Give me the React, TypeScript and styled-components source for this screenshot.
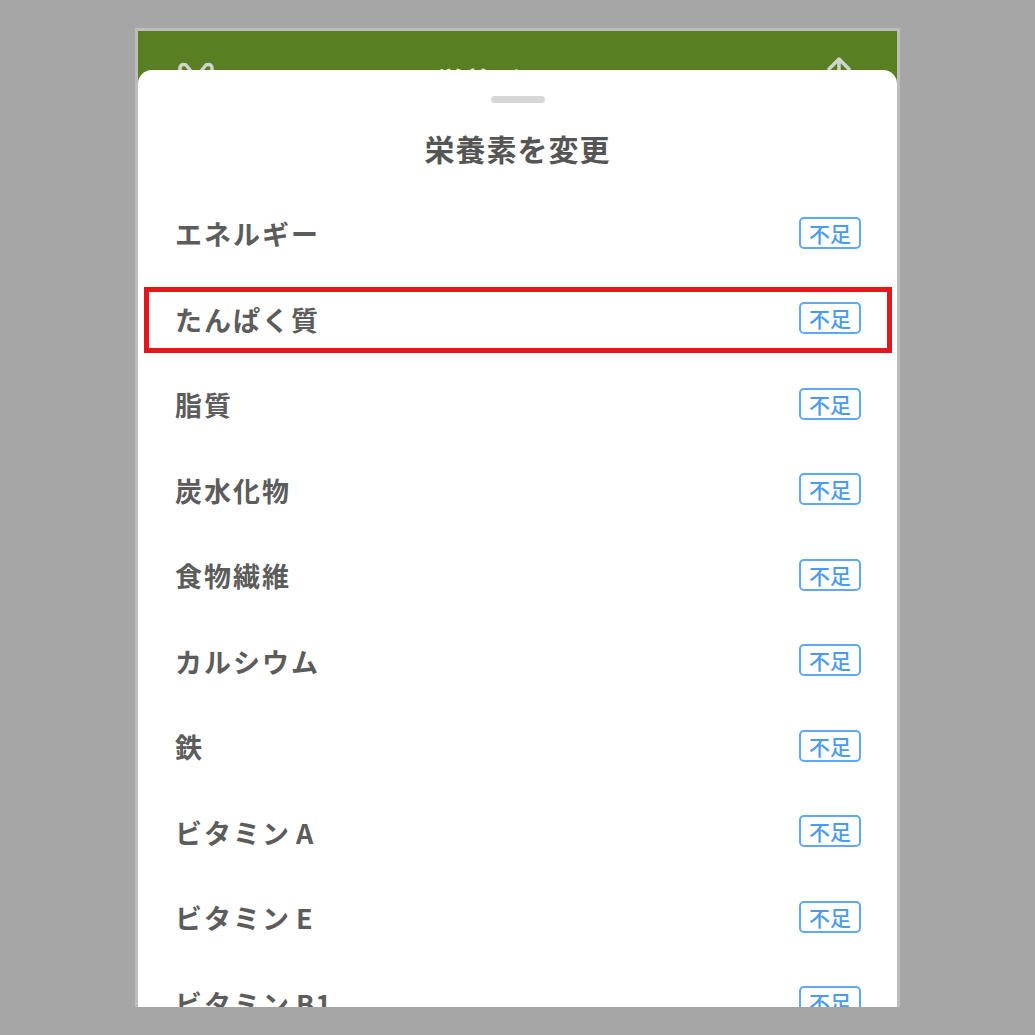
import * as React from "react";
import styled, { createGlobalStyle } from "styled-components";

const GlobalStyle = createGlobalStyle`
  html, body {
    margin: 0;
    padding: 0;
    background: #a6a6a6;
  }
  body {
    font-family: "Noto Sans CJK JP", "Noto Sans", sans-serif;
  }
`;

const nutrients = [
  "エネルギー",
  "たんぱく質",
  "脂質",
  "炭水化物",
  "食物繊維",
  "カルシウム",
  "鉄",
  "ビタミンA",
  "ビタミンE",
  "ビタミンB1",
  "ビタミンB2",
];

// Latin suffix (A, E, B1...) sits a little apart from the kana, as in the app font
function splitName(name: string) {
  const m = name.match(/^(.*?)([A-Z][0-9]*)$/);
  return m ? [m[1], m[2]] : [name, ""];
}

function App() {
  const [selected, setSelected] = React.useState(1);
  return (
    <>
      <GlobalStyle />
      <Page>
        <Frame>
          <Header>
            <HeaderIcon width="44" height="40" viewBox="0 0 44 40">
              <path d="M6 40 V14 Q6 8 12 10 L22 22 L32 10 Q38 8 38 14 V40" />
            </HeaderIcon>
            <HeaderTitle>栄養バランス</HeaderTitle>
            <HeaderIcon width="36" height="40" viewBox="0 0 36 40">
              <path d="M18 30 V4 M8 14 L18 4 L28 14 M6 22 H2 V40 M30 22 H34 V40" />
            </HeaderIcon>
          </Header>
          <Sheet>
            <Handle />
            <Title>栄養素を変更</Title>
            <List>
              {nutrients.map((name, i) => {
                const [kana, latin] = splitName(name);
                return (
                  <Row
                    key={name}
                    $highlighted={i === selected}
                    onClick={() => setSelected(i)}
                  >
                    <Label>
                      {kana}
                      {latin && <Latin>{latin}</Latin>}
                    </Label>
                    <Badge>不足</Badge>
                  </Row>
                );
              })}
            </List>
          </Sheet>
        </Frame>
      </Page>
    </>
  );
}

const Page = styled.div`
  display: flex;
  justify-content: center;
  padding-top: 28px;
  height: 1035px;
  box-sizing: border-box;
  overflow: hidden;
`;

const Frame = styled.div`
  position: relative;
  width: 759px;
  height: 976px;
  border: 3px solid #bdbdbd;
  border-bottom: none;
  overflow: hidden;
  background: #587f21;
`;

const Header = styled.div`
  display: flex;
  align-items: flex-start;
  justify-content: space-between;
  height: 100px;
  padding: 24px 40px 0 36px;
  box-sizing: border-box;
  background: #587f21;
`;

const HeaderIcon = styled.svg`
  fill: none;
  stroke: #d0d4cc;
  stroke-width: 3.5;
  stroke-linecap: round;
  stroke-linejoin: round;
`;

const HeaderTitle = styled.div`
  margin-top: 6px;
  font-size: 28px;
  font-weight: 700;
  color: #e4e8df;
`;

const Sheet = styled.div`
  position: absolute;
  top: 39px;
  left: 0;
  right: 0;
  bottom: 0;
  display: flex;
  flex-direction: column;
  align-items: stretch;
  padding-top: 26px;
  background: #ffffff;
  border-radius: 14px 14px 0 0;
  overflow: hidden;

  & > * {
    flex-shrink: 0;
  }
`;

const Handle = styled.div`
  align-self: center;
  width: 54px;
  height: 7px;
  border-radius: 4px;
  background: #d6d6d6;
`;

const Title = styled.h1`
  margin: 25px 0 0;
  height: 40px;
  line-height: 40px;
  text-align: center;
  font-size: 30px;
  font-weight: 700;
  color: #555555;
  letter-spacing: 1px;
`;

const List = styled.div`
  display: flex;
  flex-direction: column;
  margin-top: 23px;
`;

const Row = styled.div<{ $highlighted: boolean }>`
  position: relative;
  display: flex;
  align-items: center;
  justify-content: space-between;
  flex-shrink: 0;
  height: 85.5px;
  padding: 0 36px 0 37px;
  cursor: pointer;

  &::after {
    content: "";
    display: ${(p) => (p.$highlighted ? "block" : "none")};
    position: absolute;
    top: 10px;
    bottom: 9px;
    left: 6px;
    right: 5px;
    border: 5px solid #e3161c;
    pointer-events: none;
  }
`;

const Label = styled.span`
  font-size: 27px;
  font-weight: 700;
  color: #5c5c5c;
  letter-spacing: 2px;
`;

const Latin = styled.span`
  margin-left: 5px;
  letter-spacing: 1px;
`;

const Badge = styled.span`
  display: flex;
  align-items: center;
  justify-content: center;
  width: 62px;
  height: 32px;
  box-sizing: border-box;
  border: 2px solid #5ea8f5;
  border-radius: 5px;
  font-size: 21px;
  font-weight: 500;
  color: #4a9bf0;
  margin-top: -2px;
`;

export default App;
